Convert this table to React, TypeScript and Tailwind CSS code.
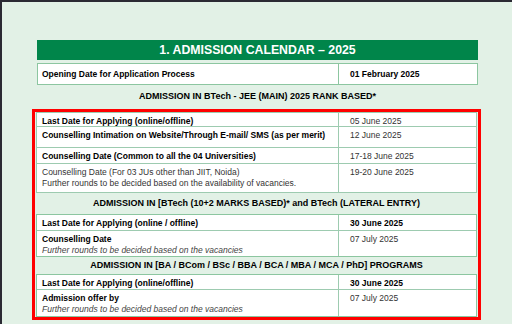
const font = { fontFamily: '"Liberation Sans", Arial, sans-serif' }

type Row = {
  label: string
  sub?: string
  subItalic?: boolean
  date: string
  boldLabel?: boolean
  boldDate?: boolean
  h: string
}

function DataRow({ row, last }: { row: Row; last?: boolean }) {
  return (
    <div
      className={`grid grid-cols-[302px_1fr] bg-white text-[8.5px] ${row.h} ${last ? '' : 'border-b border-[#9dcbb0]'}`}
    >
      <div className="border-r border-[#9dcbb0] px-[5px] pt-[3px] leading-[11px]">
        <div className={row.boldLabel ? 'font-bold text-black' : 'text-[#333]'}>{row.label}</div>
        {row.sub && (
          <div className={row.subItalic ? 'italic text-[#444]' : 'text-[#333]'}>{row.sub}</div>
        )}
      </div>
      <div
        className={`px-[11px] pt-[3px] leading-[11px] ${row.boldDate ? 'font-bold text-black' : 'text-[#333]'}`}
      >
        {row.date}
      </div>
    </div>
  )
}

function SectionHeader({ children, h }: { children: string; h: string }) {
  return (
    <div className={`flex items-center justify-center font-bold text-black ${h}`}>{children}</div>
  )
}

const jeeRows: Row[] = [
  { label: 'Last Date for Applying (online/offline)', date: '05 June 2025', boldLabel: true, h: 'h-[14px]' },
  {
    label: 'Counselling Intimation on Website/Through E-mail/ SMS (as per merit)',
    date: '12 June 2025',
    boldLabel: true,
    h: 'h-[21px]',
  },
  {
    label: 'Counselling Date (Common to all the 04 Universities)',
    date: '17-18 June 2025',
    boldLabel: true,
    h: 'h-[16px]',
  },
  {
    label: 'Counselling Date (For 03 JUs other than JIIT, Noida)',
    sub: 'Further rounds to be decided based on the availability of vacancies.',
    date: '19-20 June 2025',
    h: 'h-[28px]',
  },
]

const lateralRows: Row[] = [
  {
    label: 'Last Date for Applying (online / offline)',
    date: '30 June 2025',
    boldLabel: true,
    boldDate: true,
    h: 'h-[16px]',
  },
  {
    label: 'Counselling Date',
    sub: 'Further rounds to be decided based on the vacancies',
    subItalic: true,
    date: '07 July 2025',
    boldLabel: true,
    h: 'h-[25px]',
  },
]

const programRows: Row[] = [
  {
    label: 'Last Date for Applying (online/offline)',
    date: '30 June 2025',
    boldLabel: true,
    boldDate: true,
    h: 'h-[15px]',
  },
  {
    label: 'Admission offer by',
    sub: 'Further rounds to be decided based on the vacancies',
    subItalic: true,
    date: '07 July 2025',
    boldLabel: true,
    h: 'h-[26px]',
  },
]

export default function App() {
  return (
    <div
      style={font}
      className="h-[324px] w-[512px] overflow-hidden border-l-2 border-t-2 border-[#2a2a33] bg-[#e2f1e6] text-[9px]"
    >
      <div className="ml-[35px] mt-[38px] w-[441px]">
        <div className="flex h-[20px] items-center justify-center bg-[#00854a] text-[12.3px] font-bold text-white">
          1. ADMISSION CALENDAR – 2025
        </div>
        <div className="mt-[3px] grid h-[22px] grid-cols-[301px_1fr] border border-[#8cc6a0] bg-white text-[8.5px] font-bold text-black">
          <div className="flex items-center border-r border-[#8cc6a0] px-[4px]">
            Opening Date for Application Process
          </div>
          <div className="flex items-center px-[11px]">01 February 2025</div>
        </div>
        <SectionHeader h="h-[24px]">ADMISSION IN BTech - JEE (MAIN) 2025 RANK BASED*</SectionHeader>
      </div>

      <div className="ml-[30px] w-[449px] border-[3px] border-[#ff0000] px-px">
        <div className="border border-[#9dcbb0]">
          {jeeRows.map((r, i) => (
            <DataRow key={i} row={r} last={i === jeeRows.length - 1} />
          ))}
        </div>
        <SectionHeader h="h-[21px]">ADMISSION IN [BTech (10+2 MARKS BASED)* and BTech (LATERAL ENTRY)</SectionHeader>
        <div className="border border-[#8cc6a0]">
          {lateralRows.map((r, i) => (
            <DataRow key={i} row={r} last={i === lateralRows.length - 1} />
          ))}
        </div>
        <SectionHeader h="h-[17px]">ADMISSION IN [BA / BCom / BSc / BBA / BCA / MBA / MCA / PhD] PROGRAMS</SectionHeader>
        <div className="border border-[#8cc6a0]">
          {programRows.map((r, i) => (
            <DataRow key={i} row={r} last={i === programRows.length - 1} />
          ))}
        </div>
      </div>
    </div>
  )
}
